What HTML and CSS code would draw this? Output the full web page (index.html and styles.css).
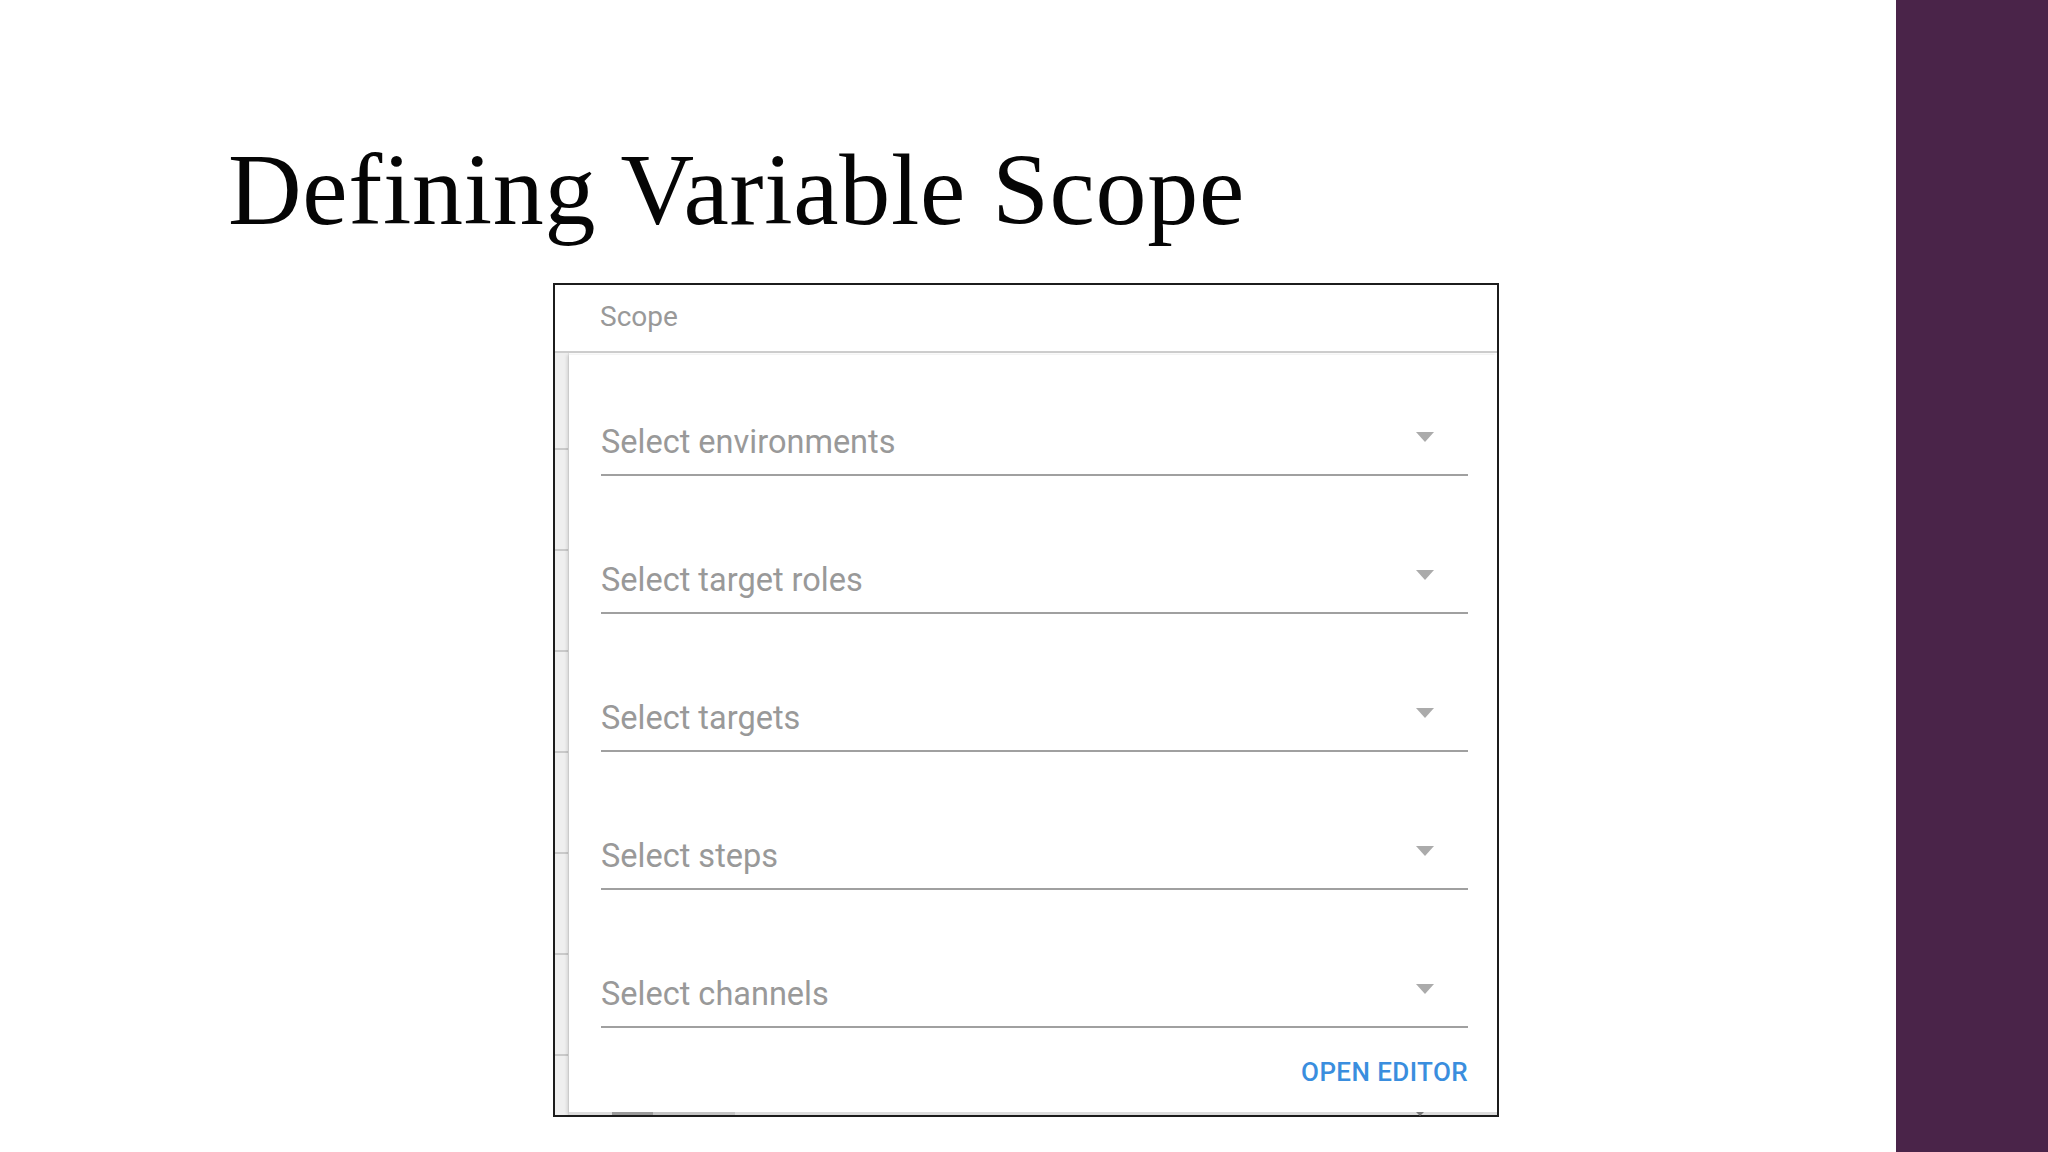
FILE: index.html
```html
<!DOCTYPE html>
<html lang="en">
<head>
  <meta charset="UTF-8" />
  <meta name="viewport" content="width=device-width, initial-scale=1.0"/>
  <title>Defining Variable Scope</title>
  <link rel="stylesheet" href="styles.css">
</head>
<body>
  <main class="slide">
    <h1 class="slide-title">Defining Variable Scope</h1>

    <section class="scope-card">
      <header class="scope-header">Scope</header>
      <div class="scope-body">
        <div class="scope-strip"></div>
        <div class="scope-panel">
          <div class="field">
            <span class="field-label">Select environments</span>
            <svg class="field-arrow" width="18" height="10" viewBox="0 0 18 10"><polygon points="0,0 18,0 9,10" /></svg>
          </div>
          <div class="field">
            <span class="field-label">Select target roles</span>
            <svg class="field-arrow" width="18" height="10" viewBox="0 0 18 10"><polygon points="0,0 18,0 9,10" /></svg>
          </div>
          <div class="field">
            <span class="field-label">Select targets</span>
            <svg class="field-arrow" width="18" height="10" viewBox="0 0 18 10"><polygon points="0,0 18,0 9,10" /></svg>
          </div>
          <div class="field">
            <span class="field-label">Select steps</span>
            <svg class="field-arrow" width="18" height="10" viewBox="0 0 18 10"><polygon points="0,0 18,0 9,10" /></svg>
          </div>
          <div class="field">
            <span class="field-label">Select channels</span>
            <svg class="field-arrow" width="18" height="10" viewBox="0 0 18 10"><polygon points="0,0 18,0 9,10" /></svg>
          </div>

          <div class="panel-footer">
            <button class="open-editor">OPEN EDITOR</button>
          </div>

          <div class="scroll-track">
            <span class="scroll-thumb"></span>
            <span class="scroll-thumb-light"></span>
            <span class="scroll-caret"></span>
          </div>
        </div>
      </div>
    </section>
  </main>

  <aside class="accent-bar"></aside>
</body>
</html>
```

FILE: styles.css
```css
:root {
  --accent-purple: #4a2449;
  --label-gray: #999999;
  --line-gray: #a0a0a0;
  --link-blue: #3a8ede;
}

body {
  margin: 0;
  display: flex;
  height: 100vh;
  overflow: hidden;
  background-color: #ffffff;
  font-family: Roboto, 'Liberation Sans', sans-serif;
}

.slide {
  flex: 1;
  display: flex;
  flex-direction: column;
}

.slide-title {
  margin: 130px 0 0 0;
  padding-left: 228px;
  height: 120px;
  line-height: 120px;
  font-family: 'Liberation Serif', 'Times New Roman', serif;
  font-size: 102px;
  font-weight: normal;
  letter-spacing: 0.7px;
  color: #050505;
  white-space: nowrap;
}

.accent-bar {
  width: 152px;
  background-color: var(--accent-purple);
}

/* scope card */

.scope-card {
  margin: 33px 0 0 553px;
  width: 942px;
  border: 2px solid #1c1c1c;
  display: flex;
  flex-direction: column;
}

.scope-header {
  padding: 18px 0 21px 45px;
  height: 27px;
  line-height: 27px;
  font-size: 28px;
  color: var(--label-gray);
  border-bottom: 2px solid #cdcdcd;
}

.scope-body {
  display: flex;
}

.scope-strip {
  width: 13px;
  background-color: #efefef;
  background-image: repeating-linear-gradient(to bottom, transparent 0 99px, #cacaca 99px 101px);
  background-position: 0 -4px;
  border-right: 1px solid #e2e2e2;
}

.scope-panel {
  flex: 1;
  margin-top: 2px;
  padding: 71px 29px 0 32px;
  display: flex;
  flex-direction: column;
  gap: 88px;
  background-color: #fff;
  box-shadow: -2px 0 3px rgba(0, 0, 0, 0.12);
}

.field {
  height: 48px;
  display: flex;
  justify-content: space-between;
  align-items: flex-start;
  border-bottom: 2px solid var(--line-gray);
}

.field-label {
  font-size: 32.5px;
  line-height: 32.5px;
  color: var(--label-gray);
}

.field-arrow {
  margin: 6px 34px 0 0;
  fill: #ababab;
}

.panel-footer {
  margin-top: -56px;
  display: flex;
  justify-content: flex-end;
}

.open-editor {
  padding: 0;
  border: none;
  background: none;
  font-family: Roboto, 'Liberation Sans', sans-serif;
  font-size: 26px;
  line-height: 25px;
  font-weight: 500;
  letter-spacing: 0.4px;
  color: var(--link-blue);
  cursor: pointer;
}

.scroll-track {
  margin: -61px -29px 0 -32px;
  height: 3px;
  display: flex;
  align-items: center;
  background-color: #dcdcdc;
}

.scroll-thumb {
  margin-left: 43px;
  width: 41px;
  height: 3px;
  background-color: #9a9a9a;
}

.scroll-thumb-light {
  width: 82px;
  height: 3px;
  background-color: #c4c4c4;
}

.scroll-caret {
  margin-left: auto;
  margin-right: 73px;
  width: 0;
  height: 0;
  border-left: 4px solid transparent;
  border-right: 4px solid transparent;
  border-top: 4px solid #777;
}
```
